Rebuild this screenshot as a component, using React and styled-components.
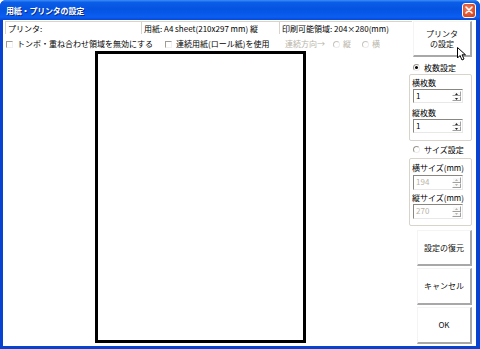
import React from 'react';
import styled, { createGlobalStyle } from 'styled-components';

const Global = createGlobalStyle`
  html, body { margin: 0; padding: 0; background: #fff; }
  body {
    width: 480px; height: 349px; overflow: hidden;
    font-family: "Noto Sans CJK JP", "DejaVu Sans", sans-serif;
  }
`;

const Window = styled.div`
  position: relative;
  width: 480px;
  height: 349px;
  box-sizing: border-box;
  display: flex;
  flex-direction: column;
  background: #0842d0;
  border-radius: 6px 6px 0 0;
  overflow: hidden;
`;

const TitleBar = styled.div`
  height: 20px;
  flex-shrink: 0;
  display: flex;
  align-items: center;
  padding: 0 4px 0 6px;
  background: linear-gradient(to bottom, #3d8cf5 0%, #0a5ee8 12%, #0553e0 45%, #0a5ef2 85%, #0648d6 100%);
`;

const Title = styled.span`
  color: #fff;
  font-size: 8px;
  font-weight: 700;
  letter-spacing: -0.2px;
  text-shadow: 1px 1px 0 #0b2a8a;
`;

const CloseButton = styled.div`
  margin-left: auto;
  width: 14px;
  height: 15px;
  box-sizing: border-box;
  border: 1px solid #fff;
  border-radius: 3px;
  background: radial-gradient(circle at 40% 40%, #f0866a 0%, #e0532f 55%, #c23a1a 100%);
  display: flex;
  align-items: center;
  justify-content: center;
`;

const Client = styled.div`
  flex: 1;
  margin: 0 4px 3px 3px;
  background: #fff;
  display: flex;
  color: #000;
  font-size: 8px;
  line-height: 1;
`;

const LeftCol = styled.div`
  width: 406px;
  flex-shrink: 0;
  display: flex;
  flex-direction: column;
`;

const FieldsRow = styled.div`
  display: flex;
  margin: 1px 0 0 2px;
  height: 13px;
`;

const Field = styled.div`
  width: ${p => p.$w}px;
  flex-shrink: 0;
  box-sizing: border-box;
  border-top: 1px solid #d8d4cc;
  border-left: 1px solid #d8d4cc;
  padding: 3px 0 0 2px;
  white-space: nowrap;
  overflow: hidden;
`;

const OptionsRow = styled.div`
  display: flex;
  align-items: center;
  margin: 4px 0 0 3px;
  height: 12px;
`;

const Option = styled.label`
  width: ${p => (p.$w ? `${p.$w}px` : 'auto')};
  flex-shrink: 0;
  display: flex;
  align-items: center;
  gap: ${p => p.$gap || 4}px;
  white-space: nowrap;
  color: ${p => (p.$disabled ? '#b8b4a8' : '#000')};
`;

const Spacer = styled.span`
  width: ${p => p.$w}px;
  flex-shrink: 0;
`;

const CheckBox = styled.span`
  width: 7px;
  height: 7px;
  box-sizing: border-box;
  border-top: 1px solid #a09c94;
  border-left: 1px solid #a09c94;
  border-right: 1px solid #f0f0f0;
  border-bottom: 1px solid #f0f0f0;
  flex-shrink: 0;
`;

const Radio = styled.span`
  width: 7px;
  height: 7px;
  box-sizing: border-box;
  border-radius: 50%;
  border: 1px solid ${p => (p.$disabled ? '#c8c4bc' : '#9a968e')};
  border-right-color: #ececec;
  border-bottom-color: #ececec;
  flex-shrink: 0;
  display: flex;
  align-items: center;
  justify-content: center;
  &::after {
    content: '';
    display: ${p => (p.$checked ? 'block' : 'none')};
    width: 3px;
    height: 3px;
    border-radius: 50%;
    background: #000;
  }
`;

const Paper = styled.div`
  margin: 1px 0 0 92px;
  width: 211px;
  height: 292px;
  box-sizing: border-box;
  border: 3px solid #000;
  background: #fff;
`;

const RightCol = styled.div`
  flex: 1;
  display: flex;
  flex-direction: column;
`;

const PushButton = styled.div`
  margin: ${p => p.$m};
  width: ${p => p.$w}px;
  height: ${p => p.$h}px;
  box-sizing: border-box;
  border-top: 1px solid #f4f4f4;
  border-left: 1px solid #f4f4f4;
  border-right: 2px solid #a8a8a8;
  border-bottom: 2px solid #a8a8a8;
  background: #fff;
  display: flex;
  flex-direction: column;
  align-items: center;
  justify-content: center;
  gap: 2px;
  font-size: 8px;
  color: #111;
  text-align: center;
  flex-shrink: 0;
`;

const RadioRow = styled.div`
  display: flex;
  align-items: center;
  gap: 4px;
  margin: ${p => p.$m};
  padding-left: 4px;
  height: 9px;
`;

const Group = styled.div`
  margin: ${p => p.$m};
  width: 63px;
  box-sizing: border-box;
  border: 1px solid #d8d4cc;
  border-radius: 2px;
  padding: ${p => p.$pad};
  display: flex;
  flex-direction: column;
`;

const GroupLabel = styled.div`
  height: 9px;
  margin: ${p => p.$m};
  padding-left: 2px;
  white-space: nowrap;
`;

const Spinner = styled.div`
  width: 50px;
  height: ${p => p.$h}px;
  margin: ${p => p.$m};
  box-sizing: border-box;
  margin-left: 3px;
  border-top: 1px solid #8a8680;
  border-left: 1px solid #8a8680;
  border-right: 1px solid #e8e8e8;
  border-bottom: 1px solid #e8e8e8;
  background: #fff;
  display: flex;
  align-items: stretch;
`;

const SpinValue = styled.div`
  flex: 1;
  padding: 2px 0 0 2px;
  color: ${p => (p.$disabled ? '#b8b4a8' : '#000')};
`;

const SpinButtons = styled.div`
  width: 9px;
  display: flex;
  flex-direction: column;
  margin: 1px 1px 1px 0;
`;

const SpinBtn = styled.div`
  flex: 1;
  box-sizing: border-box;
  border-top: 1px solid #fff;
  border-left: 1px solid #fff;
  border-right: 1px solid #a0a0a0;
  border-bottom: 1px solid #a0a0a0;
  background: #f8f8f8;
  display: flex;
  align-items: center;
  justify-content: center;
`;

const Cursor = styled.svg`
  position: absolute;
  left: 457px;
  top: 47px;
`;

function Arrow({ up, disabled }) {
  const c = disabled ? '#b8b4a8' : '#222';
  return (
    <svg width="3" height="2" viewBox="0 0 3 2">
      {up ? <path d="M1.5 0 L3 2 L0 2 Z" fill={c} /> : <path d="M0 0 L3 0 L1.5 2 Z" fill={c} />}
    </svg>
  );
}

function Spin({ value, disabled, h = 14, m = '0' }) {
  return (
    <Spinner $h={h} $m={m}>
      <SpinValue $disabled={disabled}>{value}</SpinValue>
      <SpinButtons>
        <SpinBtn><Arrow up disabled={disabled} /></SpinBtn>
        <SpinBtn><Arrow disabled={disabled} /></SpinBtn>
      </SpinButtons>
    </Spinner>
  );
}

export default function App() {
  return (
    <>
      <Global />
      <Window>
        <TitleBar>
          <Title>用紙・プリンタの設定</Title>
          <CloseButton>
            <svg width="8" height="8" viewBox="0 0 8 8">
              <path d="M1 1 L7 7 M7 1 L1 7" stroke="#fff" strokeWidth="1.6" strokeLinecap="round" />
            </svg>
          </CloseButton>
        </TitleBar>
        <Client>
          <LeftCol>
            <FieldsRow>
              <Field $w={136}>プリンタ:</Field>
              <Field $w={138}>用紙: A4 sheet(210x297 mm) 縦</Field>
              <Field $w={133}>印刷可能領域: 204×280(mm)</Field>
            </FieldsRow>
            <OptionsRow>
              <Option $w={159}><CheckBox />トンボ・重ね合わせ領域を無効にする</Option>
              <Option $w={120}><CheckBox />連続用紙(ロール紙)を使用</Option>
              <Option $disabled $gap={3}>
                連続方向→<Spacer $w={2} /><Radio $disabled />縦<Spacer $w={5} /><Radio $disabled />横
              </Option>
            </OptionsRow>
            <Paper />
          </LeftCol>
          <RightCol>
            <PushButton $m="1px 0 0 4px" $w={59} $h={36}>
              <span>プリンタ</span>
              <span>の設定</span>
            </PushButton>
            <RadioRow $m="6px 0 0 0"><Radio $checked />枚数設定</RadioRow>
            <Group $m="2px 0 0 0" $pad="4px 0 7px 0">
              <GroupLabel $m="0">横枚数</GroupLabel>
              <Spin value="1" m="1px 0 0 0" />
              <GroupLabel $m="6px 0 0 0">縦枚数</GroupLabel>
              <Spin value="1" m="1px 0 0 0" />
            </Group>
            <RadioRow $m="4px 0 0 0"><Radio />サイズ設定</RadioRow>
            <Group $m="4px 0 0 0" $pad="5px 0 6px 0">
              <GroupLabel $m="0">横サイズ(mm)</GroupLabel>
              <Spin value="194" disabled h={15} m="2px 0 0 0" />
              <GroupLabel $m="4px 0 0 0">縦サイズ(mm)</GroupLabel>
              <Spin value="270" disabled h={15} m="1px 0 0 0" />
            </Group>
            <PushButton $m="4px 0 0 8px" $w={55} $h={36}>設定の復元</PushButton>
            <PushButton $m="2px 0 0 8px" $w={55} $h={37}>キャンセル</PushButton>
            <PushButton $m="2px 0 0 8px" $w={55} $h={37}>OK</PushButton>
          </RightCol>
        </Client>
        <Cursor width="11" height="14" viewBox="0 0 11 14">
          <path d="M0.5 0.5 L0.5 11 L3 8.5 L5 13 L7 12 L5 7.8 L8.5 7.8 Z" fill="#fff" stroke="#000" strokeWidth="1" />
        </Cursor>
      </Window>
    </>
  );
}
